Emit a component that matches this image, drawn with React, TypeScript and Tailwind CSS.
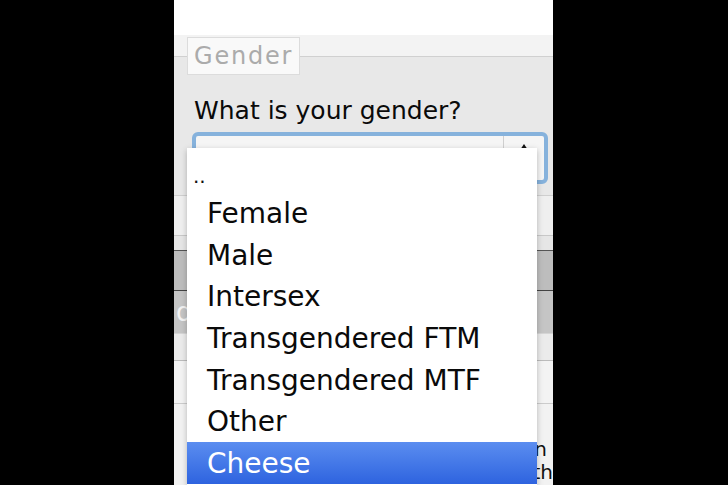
import React from 'react'

const options = ['Female', 'Male', 'Intersex', 'Transgendered FTM', 'Transgendered MTF', 'Other', 'Cheese']

export default function App() {
  const selected = 'Cheese'

  return (
    <div className="w-[728px] h-[485px] bg-black flex pl-[174px] overflow-hidden font-['DejaVu_Sans',sans-serif]">
      <div className="relative w-[379px] h-[485px] bg-white overflow-hidden flex flex-col">
        {/* top white strip */}
        <div className="h-[35px] shrink-0 bg-white" />

        {/* form fieldset */}
        <div className="shrink-0 bg-[#f3f3f3] pt-[2px]">
          <fieldset className="border-t border-x-0 border-b-0 border-[#d0d0d0] bg-[#e8e8e8] pb-[11px]">
            <legend className="ml-[13px] h-[38px] px-[6px] bg-[#f9f9f9] border border-[#dcdcdc] text-[24px] tracking-[1.8px] leading-[36px] text-[#ababab]">
              Gender
            </legend>
            <p className="pt-[21px] pl-[20px] text-[25px] leading-[30px] text-[#0a0a0a]">What is your gender?</p>
            <div className="mt-[6px] ml-[18px] w-[356px] h-[52px] rounded-[6px] border-[4px] border-[#86b2dc] bg-[#f5f5f5] flex justify-end">
              <div className="w-[41px] border-l border-[#cfcfcf] flex flex-col items-center pt-[8px] gap-[4px]">
                <svg width="8" height="6" viewBox="0 0 8 6">
                  <path d="M4 0 L8 6 L0 6 Z" fill="#111" />
                </svg>
                <svg width="8" height="6" viewBox="0 0 8 6">
                  <path d="M0 0 L8 0 L4 6 Z" fill="#999" />
                </svg>
              </div>
            </div>
          </fieldset>
        </div>

        {/* rows behind the open list */}
        <div className="h-[40px] shrink-0 border-t border-[#cfcfcf] bg-[#efefef]" />
        <div className="h-[15px] shrink-0 border-t border-[#c8c8c8] bg-[#e6e6e6]" />
        <div className="h-[40px] shrink-0 border-t border-[#555] bg-[#bdbdbd]" />
        <div className="h-[43px] shrink-0 border-t border-[#444] bg-[#c5c5c5] flex items-center pl-[2px]">
          <span className="text-[26px] text-white/80">d</span>
        </div>
        <div className="h-[27px] shrink-0 border-t border-[#d5d5d5] bg-[#ebebeb]" />
        <div className="h-[43px] shrink-0 border-t border-[#bbb] bg-[#f3f3f3]" />
        <div className="flex-1 border-t border-[#ccc] bg-[#f2f2f2] flex flex-col items-end pt-[34px] text-[20px] leading-[23px] text-[#111]">
          <span className="mr-[6px]">n</span>
          <span className="mr-0">th</span>
        </div>

        {/* open select menu */}
        <div className="absolute left-[13px] top-[148px] w-[350px] bottom-0 bg-white shadow-[0_2px_6px_rgba(0,0,0,0.25)] flex flex-col">
          <div className="h-[44px] shrink-0 flex items-end pl-[6px] pb-[4px] text-[20px] leading-[24px] text-[#111]">..</div>
          {options.map((opt) => (
            <div
              key={opt}
              className={
                opt === selected
                  ? 'h-[41.7px] shrink-0 flex items-center pl-[20px] pt-[2px] text-[28px] leading-[41.7px] text-white bg-gradient-to-b from-[#5b8df0] to-[#2e63df]'
                  : 'h-[41.7px] shrink-0 flex items-center pl-[20px] pt-[2px] text-[28px] leading-[41.7px] text-[#0a0a0a]'
              }
            >
              {opt}
            </div>
          ))}
        </div>
      </div>
    </div>
  )
}
